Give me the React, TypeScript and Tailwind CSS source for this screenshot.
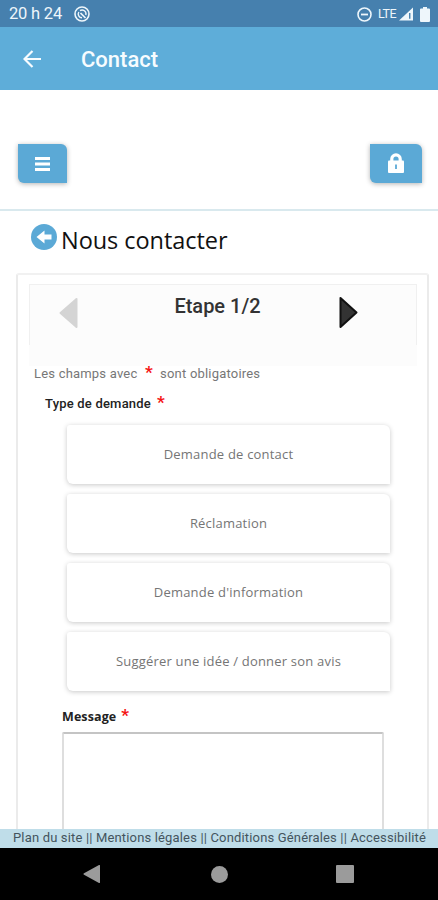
const requestTypes = [
  'Demande de contact',
  'Réclamation',
  "Demande d'information",
  'Suggérer une idée / donner son avis',
]

const footerLinks = ['Plan du site', 'Mentions légales', 'Conditions Générales', 'Accessibilité']

function Required() {
  return (
    <span className="inline-block w-[9px] text-center font-[Roboto,sans-serif] text-[17px] leading-[10px] font-bold tracking-normal text-[#f51414]">
      *
    </span>
  )
}

function StatusBar() {
  return (
    <div className="flex h-[27px] shrink-0 items-center bg-[#4680ae] pt-px pl-[9px] pr-2 text-[#eef6fb]">
      <span className="text-[16.5px] leading-none tracking-[-0.2px] whitespace-nowrap">20 h 24</span>
      <svg className="ml-3 size-4" viewBox="0 0 16 16" fill="none" stroke="currentColor">
        <circle cx="8" cy="8" r="7" strokeWidth="1.6" />
        <path d="M8 11.800A3.800 3.800 0 0 1 4.800 6" strokeWidth="1.4" />
        <path d="M6 4.600A3.900 3.900 0 0 1 11.800 9" strokeWidth="1.4" />
        <path d="M6.500 7l5 5" strokeWidth="1.7" />
      </svg>
      <div className="ml-auto flex items-center">
        <svg className="size-[15px]" viewBox="0 0 15 15" fill="none" stroke="currentColor">
          <circle cx="7.5" cy="7.5" r="6.5" strokeWidth="1.6" />
          <path d="M4 7.5h7" strokeWidth="1.8" />
        </svg>
        <span className="ml-[6px] w-[21px] text-[12.5px] leading-none tracking-[-0.5px]">LTE</span>
        <svg className="h-[14px] w-[14px]" viewBox="0 0 15 14" fill="none">
          <path d="M15 0v14H0z" fill="currentColor" />
          <path d="M11.5 6v6" stroke="#4680ae" strokeWidth="1.5" />
        </svg>
        <svg className="ml-[7px] h-[15px] w-[10px]" viewBox="0 0 10 15" fill="currentColor">
          <path d="M3 0h4v1.5h2a1 1 0 0 1 1 1V14a1 1 0 0 1-1 1H1a1 1 0 0 1-1-1V2.5a1 1 0 0 1 1-1h2z" />
        </svg>
      </div>
    </div>
  )
}

function AppBar() {
  return (
    <header className="flex h-[63px] shrink-0 items-center bg-[#5eadd9] pl-[23px] text-[#f7fcff]">
      <svg className="size-[18px]" viewBox="0 0 18 18" fill="none" stroke="currentColor" strokeWidth="2.2">
        <path d="M18 9H1.8M9.5 1L1.5 9l8 8" />
      </svg>
      <h1 className="ml-10 pt-[3px] text-[22px] leading-none font-medium">Contact</h1>
    </header>
  )
}

function Toolbar() {
  return (
    <div className="flex h-[121px] shrink-0 items-start justify-between border-b-2 border-[#d9e9ee] pt-[54px] pr-4 pl-[18px] text-white">
      <button className="flex h-[39px] w-[49px] items-center justify-center rounded-tr-md rounded-bl-md bg-[#5ba9d6] shadow-[0_1px_5px_rgba(0,0,0,0.3)]">
        <svg className="h-[14px] w-[15px]" viewBox="0 0 15 14" fill="currentColor">
          <path d="M0 0h15v3H0zM0 5.5h15v3H0zM0 11h15v3H0z" />
        </svg>
      </button>
      <button className="flex h-[39px] w-[52px] items-center justify-center rounded-tr-md rounded-bl-md bg-[#5ba9d6] pr-px pb-px shadow-[0_1px_5px_rgba(0,0,0,0.3)]">
        <svg className="h-[20px] w-[16px]" viewBox="0 0 16 20" fill="none">
          <path d="M3.800 9V6a4.200 4.200 0 0 1 8.400 0V9" stroke="currentColor" strokeWidth="3.2" />
          <rect y="7.500" width="16" height="12.500" rx="1" fill="currentColor" />
          <path d="M8 11.5v4.5" stroke="#5ba9d6" strokeWidth="1.8" />
        </svg>
      </button>
    </div>
  )
}

function StepHeader() {
  return (
    <div className="h-[82px] bg-[#fcfcfc]">
      <div className="flex h-[61px] items-start border-x border-t border-[#f0f0f0] pl-[29px] pr-[58px]">
        <svg className="mt-3 h-[32px] w-[19px]" viewBox="0 0 19 32">
          <path d="M17.5 2v28L1.5 16z" fill="#d4d4d4" stroke="#d4d4d4" strokeWidth="2" strokeLinejoin="round" />
        </svg>
        <h3 className="mt-[9px] flex-1 pl-[18px] text-center text-[20px] leading-6 font-medium text-[#333]">Etape 1/2</h3>
        <svg className="mt-[11px] h-[33px] w-[19px]" viewBox="0 0 19 33">
          <path d="M1.5 2v29L17.5 16.5z" fill="#333" stroke="#111" strokeWidth="2" strokeLinejoin="round" />
        </svg>
      </div>
    </div>
  )
}

function ContactForm() {
  return (
    <section className="mt-[16px] ml-[16px] w-[413px] flex-1 rounded-t-[3px] border-2 border-b-0 border-[#ebebeb] border-t-[#f1f1f1] pr-[10px] pl-[11px] pt-[9px]">
      <StepHeader />
      <p className="-mt-0.5 h-[18px] pl-[5px] text-[13px] leading-[19px] tracking-[0.2px] whitespace-pre text-[#777]">
        Les champs avec  <Required />  sont obligatoires
      </p>
      <p className="mt-3 h-[18px] pl-4 text-[13px] leading-[19px] font-medium tracking-[0.2px] text-[#222]">
        Type de demande <span className="pl-0.5"><Required /></span>
      </p>
      <div className="mt-[13px] ml-[38px] grid w-[323px] gap-[10px] font-['Open_Sans',sans-serif]">
        {requestTypes.map(type => (
          <button
            key={type}
            className="h-[59px] rounded-tl-[3px] rounded-tr-md rounded-bl-md bg-white text-[13px] tracking-[0.2px] text-[#757575] shadow-[0_1px_5px_rgba(0,0,0,0.22)]"
          >
            {type}
          </button>
        ))}
      </div>
      <p className="mt-4 ml-[33px] h-[18px] font-['Open_Sans',sans-serif] text-[12.5px] leading-[20px] font-bold tracking-[0.1px] text-[#222]">
        Message <span className="pl-px"><Required /></span>
      </p>
      <textarea
        aria-label="Message"
        className="mt-[7px] ml-[33px] block h-[120px] w-[322px] resize-none rounded-t-[2px] border-2 border-[#dedede] border-t-[#c4c4c4] bg-white"
      />
    </section>
  )
}

function NavigationBar() {
  return (
    <nav className="flex h-[52px] shrink-0 items-center bg-black pl-[83px] text-[#9b9b9b]">
      <svg className="size-[18px]" viewBox="0 0 18 18" fill="currentColor">
        <path d="M17 .7v16.600a.7.7 0 0 1-1 .6L1 9.8a.9.9 0 0 1 0-1.600L16 .1a.7.7 0 0 1 1 .6z" />
      </svg>
      <span className="ml-[110px] size-[17px] rounded-full bg-current" />
      <span className="ml-[108px] size-[18px] rounded-[1px] bg-current" />
    </nav>
  )
}

export default function App() {
  return (
    <div className="flex h-screen flex-col overflow-hidden bg-white font-[Roboto,sans-serif]">
      <StatusBar />
      <AppBar />
      <main className="flex min-h-0 flex-1 flex-col overflow-hidden">
        <Toolbar />
        <div className="mt-[13px] flex h-[33px] shrink-0 items-start pl-[31px]">
          <svg className="size-[26px]" viewBox="0 0 26 26">
            <circle cx="13" cy="13" r="13" fill="#5ba9d6" />
            <path d="M5.500 13l8-6.500v4H20.500v5h-7v4z" fill="#fff" />
          </svg>
          <h2 className="ml-1 pt-[5px] font-['Open_Sans',sans-serif] text-[23.5px] leading-none tracking-[-0.05px] whitespace-nowrap text-[#111]">
            Nous contacter
          </h2>
        </div>
        <ContactForm />
      </main>
      <footer className="h-[19px] shrink-0 bg-[#bfdde9] pl-[13px] text-[13px] leading-[18px] tracking-[0.16px] whitespace-nowrap text-[#44545d]">
        {footerLinks.join(' || ')}
      </footer>
      <NavigationBar />
    </div>
  )
}
